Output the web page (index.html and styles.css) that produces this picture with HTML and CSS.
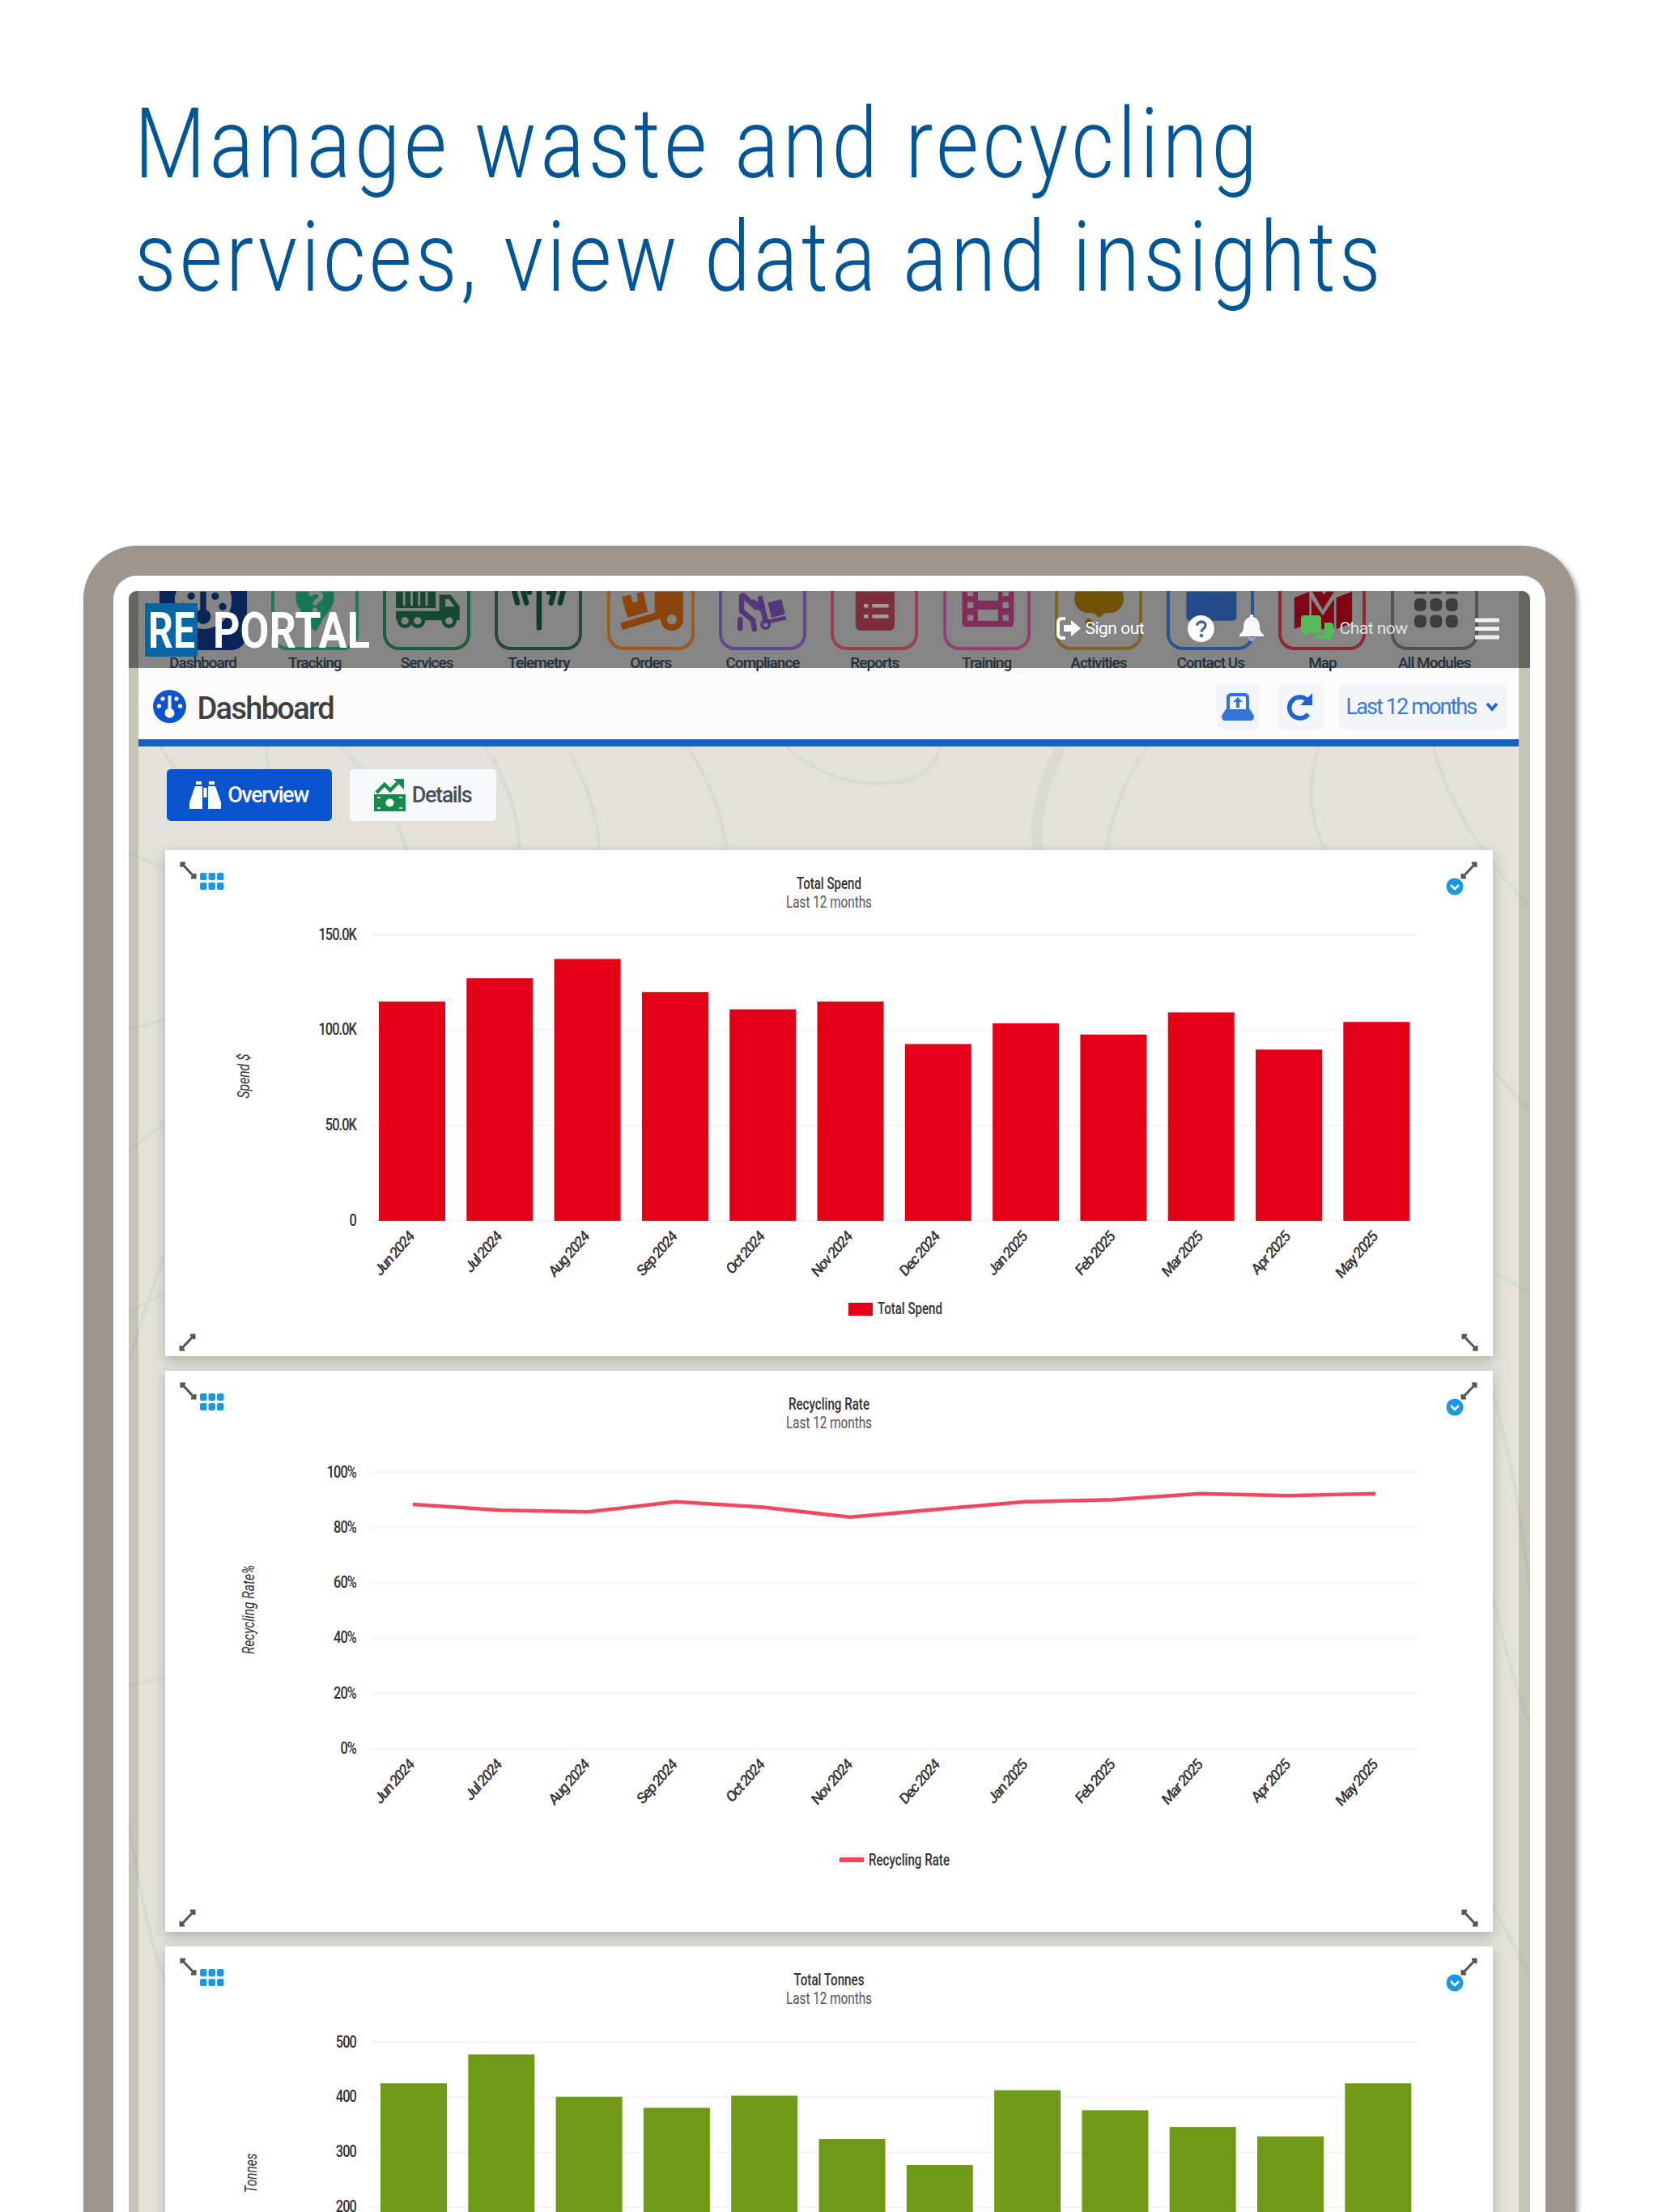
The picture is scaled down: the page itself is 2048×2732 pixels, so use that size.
FILE: index.html
```html
<!DOCTYPE html>
<html lang="en">
<head>
    <meta charset="UTF-8">
    <meta name="viewport" content="width=device-width, initial-scale=1.0">
    <title>RE PORTAL - Dashboard</title>
    <link rel="stylesheet" href="styles.css">
</head>
<body>
    <h1 class="headline">
        <span class="line line-one">Manage waste and recycling</span>
        <span class="line line-two">services, view data and insights</span>
    </h1>

    <div class="tablet">
        <div class="screen">
            <header class="header">
                <div class="modules">
                    <div class="module dashboard">
                        <svg viewBox="0 0 108 73"><circle cx="54" cy="12" r="38" fill="#858585"/><path d="M50 0h8v24a10 10 0 1 1-8 0z"/><circle cx="38" cy="6" r="5"/><circle cx="70" cy="6" r="5"/><circle cx="80" cy="20" r="5"/><circle cx="28" cy="20" r="5"/></svg>
                        <span>Dashboard</span>
                    </div>
                    <div class="module tracking">
                        <svg viewBox="0 0 108 73"><path d="M29 0h50c3 18-7 27-14 36l-9 16h-4l-9-16C36 27 26 18 29 0z"/><path d="M47 5c3-6 15-6 15 1 0 6-8 5-8 12" fill="none" stroke="#858585" stroke-width="6"/><circle cx="54" cy="25" r="3.5" fill="#858585"/></svg>
                        <span>Tracking</span>
                    </div>
                    <div class="module services">
                        <svg viewBox="0 0 108 73"><path d="M13 0h53v22H13zM71 4h15l12 16v18H13V26h58z"/><path d="M24 0v19M34 0v19M44 0v19M54 0v19" stroke="#858585" stroke-width="3"/><path d="M79 10h5l7 10H79z" fill="#858585"/><g fill="#858585" stroke="#154a30" stroke-width="5"><circle cx="25" cy="39" r="7.5"/><circle cx="42" cy="39" r="7.5"/><circle cx="84" cy="39" r="7.5"/></g></svg>
                        <span>Services</span>
                    </div>
                    <div class="module telemetry">
                        <svg viewBox="0 0 108 73"><path d="M55 0v48M42 0v1M68 0v1M34 0l4 15M22 0l4 15M75 0l-4 15M87 0l-4 15" fill="none" stroke="#103a2a" stroke-width="7" stroke-linecap="round"/></svg>
                        <span>Telemetry</span>
                    </div>
                    <div class="module orders">
                        <svg viewBox="0 0 108 73"><path d="M15 7l12-3 3 11 7-2-2-11 9-2 6 27-27 8zM59 0h38v38a15 15 0 1 1-30-2l-51 15-3-9 46-14z"/><circle cx="82" cy="37" r="6.5" fill="#858585"/></svg>
                        <span>Orders</span>
                    </div>
                    <div class="module compliance">
                        <svg viewBox="0 0 108 73"><path d="M24 37v12M26 26l15 12 2 12M26 6l0 20M28 5l17 16M51 9l0 13-9-8M51 9l7 30" fill="none" stroke="#54367a" stroke-width="7" stroke-linecap="round"/><circle cx="58" cy="44" r="5" fill="none" stroke="#54367a" stroke-width="4"/><path d="M61 40l24-5" stroke="#54367a" stroke-width="5"/><path d="M61 15l18-5 5 20-18 5z"/></svg>
                        <span>Compliance</span>
                    </div>
                    <div class="module reports">
                        <svg viewBox="0 0 108 73"><path d="M29 0h52v45q0 7-7 7H36q-7 0-7-7z"/><path d="M51 19h22M51 33h22M40 19h6M40 33h6" stroke="#a09a9a" stroke-width="5"/></svg>
                        <span>Reports</span>
                    </div>
                    <div class="module training">
                        <svg viewBox="0 0 108 73"><path d="M21 0h69v41q0 6-6 6H27q-6 0-6-6z"/><path d="M42 0h27v12H42zM42 24h27v15H42zM28 0h8v6h-8zM75 0h8v6h-8zM28 14h8v8h-8zM75 14h8v8h-8zM28 31h8v8h-8zM75 31h8v8h-8z" fill="#858585"/></svg>
                        <span>Training</span>
                    </div>
                    <div class="module activities">
                        <svg viewBox="0 0 108 73"><path d="M24 0h62c4 12 0 24-12 28l-12 1-7 6-7-6-12-1C24 24 18 12 24 0z"/><circle cx="41" cy="41" r="5"/></svg>
                        <span>Activities</span>
                    </div>
                    <div class="module contact">
                        <svg viewBox="0 0 108 73"><path d="M22 0h67v33q0 6-6 6H28q-6 0-6-6z"/></svg>
                        <span>Contact Us</span>
                    </div>
                    <div class="module map">
                        <svg viewBox="0 0 108 73"><path d="M17 8l20-8v42l-20 8zM73 8l21-8v42l-21 8zM40 10l15 22 15-22v38l-15 2-15-6zM41 0h12l4 4 3-4h10L55 24z"/></svg>
                        <span>Map</span>
                    </div>
                    <div class="module all">
                        <svg viewBox="0 0 108 73"><path d="M27 0h16v3H27zM47 0h16v3H47zM69 0h16v3H69z"/><g><rect x="27" y="9" width="16" height="17" rx="6"/><rect x="48" y="9" width="16" height="17" rx="6"/><rect x="69" y="9" width="16" height="17" rx="6"/><rect x="27" y="31" width="16" height="17" rx="6"/><rect x="48" y="31" width="16" height="17" rx="6"/><rect x="69" y="31" width="16" height="17" rx="6"/></g></svg>
                        <span>All Modules</span>
                    </div>
                </div>
                <div class="topbar">
                    <svg class="logo" viewBox="0 0 280 66">
                        <rect width="65" height="66" fill="#0666a4"/>
                        <text x="4" y="55" textLength="58" lengthAdjust="spacingAndGlyphs">RE</text>
                        <text x="84" y="55" textLength="194" lengthAdjust="spacingAndGlyphs">PORTAL</text>
                    </svg>
                    <div class="topbar-links">
                        <a class="sign-out">
                            <svg width="31" height="28" viewBox="0 0 31 28"><path d="M11 2H7Q2 2 2 7v14q0 5 5 5h4" fill="none" stroke="#fff" stroke-width="4"/><path d="M9 10h9V4l12 10-12 10v-6H9z" fill="#fff"/></svg>
                            Sign out
                        </a>
                        <svg class="help" width="33" height="33" viewBox="0 0 33 33"><circle cx="16.500" cy="16.500" r="16.500" fill="#fff"/><path d="M11.500 12.500c1-6 10.500-6 10.500 0 0 4-5 4-5 8" fill="none" stroke="#4a6790" stroke-width="3.500"/><circle cx="17" cy="25" r="2.300" fill="#4a6790"/></svg>
                        <svg class="bell" width="30" height="36" viewBox="0 0 30 36"><path d="M13 1h4v3c7 2 8 8 8 13 0 4 2 6 5 9v2H0v-2c3-3 5-5 5-9C5 12 6 6 13 4z" fill="#f8f8f8"/><path d="M11 29h8q0 5-4 5t-4-5z" fill="#8aa6cc"/></svg>
                        <a class="chat">
                            <svg width="40" height="33" viewBox="0 0 40 33"><path d="M4 0h17q4 0 4 4v14q0 4-4 4H10l-6 5v-5q-4 0-4-4V4q0-4 4-4z"/><path d="M29 9h7q4 0 4 4v12q0 3-3 3v5l-6-4H20q-4 0-4-4h7q6 0 6-6z"/></svg>
                            Chat now
                        </a>
                        <svg class="menu" width="30" height="27" viewBox="0 0 30 27"><path d="M0 3h30M0 13.500h30M0 24h30" stroke="#eee" stroke-width="5"/></svg>
                    </div>
                </div>
            </header>

            <div class="titlebar">
                <svg width="41" height="41" viewBox="0 0 41 41"><circle cx="20.500" cy="20.500" r="20.500" fill="#0b53cf"/><path d="M18.500 7h4v16a6 6 0 1 1-4 0z" fill="#fff"/><g fill="#fff"><circle cx="12" cy="11" r="2.600"/><circle cx="29" cy="11" r="2.600"/><circle cx="7.500" cy="20" r="2.600"/><circle cx="33.500" cy="20" r="2.600"/></g></svg>
                <h2>Dashboard</h2>
                <div class="tools">
                    <button class="tool save"><svg width="40" height="34" viewBox="0 0 40 34"><path d="M8 22V6q0-4 4-4h16q4 0 4 4v16" fill="none" stroke="#3473d8" stroke-width="4"/><path d="M5 20h30l5 8q0 6-4 6H4q-4 0-4-6z" fill="#3473d8"/><path d="M20 5l6 6h-4v7h-4v-7h-4z" fill="#3473d8"/></svg></button>
                    <button class="tool refresh"><svg width="33" height="34" viewBox="0 0 33 34"><path d="M26 9A13 13 0 1 0 27 26" fill="none" stroke="#1f64d6" stroke-width="5.500"/><path d="M32 0v15H17z" fill="#1f64d6"/></svg></button>
                    <button class="period">Last 12 months <svg width="16" height="12" viewBox="0 0 16 12"><path d="M2 2l6 7 6-7" fill="none" stroke="#1f64d6" stroke-width="3.600"/></svg></button>
                </div>
            </div>

            <main class="content">
                <svg class="contours" viewBox="0 0 1731 1810" fill="none" stroke="#000" stroke-opacity=".03" stroke-width="4">
                    <path d="M38 0q40 60 110 90M170 0q0 20 5 30M262 0q80 80 90 170M440 0q60 90 35 190M540 0q60 100 35 210M690 0q60 90 50 200M812 0q50 46 115 46T1002 0"/>
                    <path d="M1152 0q-50 90-18 200" stroke-width="14"/>
                    <path d="M1258 0q-60 90-55 200M1470 0q-30 100 40 170M1612 0q20 90 119 200M0 130q60 30 100 40M0 350l50-14M0 500q40-30 60-50M0 700q30-20 60-30M0 760q60-200 60-130M0 1160l50-12M1685 400l46 50M1685 650l46 24M1685 800q30 100 46 250M1685 1050q20 90 46 160M0 1330q30 180 50 200M1685 1430q30 60 46 90"/>
                </svg>
                <nav class="tabs">
                    <button class="tab active">
                        <svg width="39" height="34" viewBox="0 0 39 34" fill="#fff"><path d="M8 0h7v4H8zM24 0h7v4h-7zM7 6h9v28H0v-8zM23 6h9l7 20v8H23zM17.500 8h4v12h-4z"/></svg>
                        Overview
                    </button>
                    <button class="tab details">
                        <svg width="39" height="40" viewBox="0 0 39 40"><path d="M3 17l10-10 7 7 9-9" fill="none" stroke="#168a4c" stroke-width="4.500"/><path d="M24 0h13v13z" fill="#168a4c"/><path d="M0 19h39v21H0z" fill="#168a4c"/><circle cx="19.500" cy="29.500" r="5" fill="#fff"/><path d="M4 23h4M4 36h4M31 23h4M31 36h4" stroke="#bfe2cd" stroke-width="2"/></svg>
                        Details
                    </button>
                </nav>
                <section class="card"><svg class="chart" id="spend" width="1640" height="625"></svg></section>
                <section class="card"><svg class="chart" id="recycling" width="1640" height="693"></svg></section>
                <section class="card"><svg class="chart" id="tonnes" width="1640" height="693"></svg></section>
            </main>
        </div>
    </div>

    <script src="script.js"></script>
</body>
</html>
```
FILE: styles.css
```css
* {
    box-sizing: border-box;
}
html {
    overflow: hidden;
}
body {
    margin: 0;
    height: 2732px;
    overflow: hidden;
    background: #ffffff;
    font-family: Roboto, "Liberation Sans", sans-serif;
}
button {
    border: none;
    font-family: inherit;
    padding: 0;
}
.headline {
    margin: 0;
    padding: 108px 0 0 166px;
    height: 674px;
    font-size: 121px;
    line-height: 140px;
    font-weight: 300;
    color: #005596;
}
.line {
    display: block;
    width: max-content;
    white-space: nowrap;
    transform-origin: left;
    transform: scaleX(0.84);
}
.line-one {
    letter-spacing: 5.700px;
}
.line-two {
    letter-spacing: 5.300px;
}

/* device frame */
.tablet {
    width: 1843px;
    height: 2058px;
    margin: 0 auto;
    padding: 19px 19px 0;
    border: 37px solid #9e958e;
    border-bottom: none;
    border-radius: 66px 66px 0 0;
    background: #ffffff;
    box-shadow: 4px 3px 5px rgba(0, 0, 0, 0.3);
}
.screen {
    height: 100%;
    border-radius: 10px 10px 0 0;
    overflow: hidden;
    background: #e2e2db;
}

/* header */
.header {
    position: relative;
    z-index: 2;
    height: 95px;
    background: #858585;
    border-left: 12px solid #66665c;
    border-right: 14px solid #66665c;
}
.modules {
    display: flex;
    gap: 30.300px;
    padding-left: 26px;
}
.module {
    flex: none;
    width: 108px;
    display: flex;
    flex-direction: column;
    align-items: center;
    font-size: 19px;
    line-height: 24px;
    font-weight: 500;
    letter-spacing: -1px;
    color: #22303a;
}
.module svg {
    width: 108px;
    height: 73px;
    margin-bottom: 4px;
    border: 4px solid;
    border-top: none;
    border-radius: 0 0 20px 20px;
}
.module span {
    white-space: nowrap;
}
.dashboard svg { border-color: #0a2458; background: #0a2458; fill: #0a2458; }
.tracking svg { border-color: #24755a; fill: #167655; }
.services svg { border-color: #1f5c3d; fill: #154a30; }
.telemetry svg { border-color: #26473a; }
.orders svg { border-color: #a05a20; fill: #8c440c; }
.compliance svg { border-color: #634a8a; fill: #54367a; }
.reports svg { border-color: #96414b; fill: #7c2f38; }
.training svg { border-color: #93406f; fill: #802d59; }
.activities svg { border-color: #7c6427; fill: #705206; }
.contact svg { border-color: #2b5590; fill: #224b88; }
.map svg { border-color: #8f2832; fill: #7f0615; }
.all svg { border-color: #4f5357; fill: #3c3c3c; }

.topbar {
    position: absolute;
    inset: 0;
    display: flex;
    justify-content: space-between;
    padding: 15px 24px 0 8px;
    color: #ffffff;
}
.logo {
    width: 280px;
    height: 66px;
}
.logo text {
    font-size: 61px;
    font-weight: 700;
    fill: #ffffff;
}
.topbar-links {
    display: flex;
    align-items: center;
    height: 62px;
    font-size: 21px;
    letter-spacing: -0.5px;
}
.topbar-links a {
    display: flex;
    align-items: center;
    gap: 5px;
    white-space: nowrap;
}
.sign-out {
    width: 162px;
}
.bell {
    margin: 0 46px 0 31px;
}
.chat {
    width: 215px;
    color: #e0e0e0;
    fill: #58b957;
}
.topbar-links .chat {
    gap: 8px;
}

/* page title */
.titlebar {
    position: relative;
    display: flex;
    align-items: center;
    height: 97px;
    margin: 0 14px 0 12px;
    padding: 7px 15px 0 18px;
    background: #fcfcfc;
    border-bottom: 9px solid #1960cf;
    box-shadow: -12px 0 0 #c5c5b7, 14px 0 0 #c5c5b7;
}
.titlebar h2 {
    margin: 5px 0 0 14px;
    font-size: 38px;
    font-weight: 500;
    letter-spacing: -1.700px;
    color: #404040;
}
.tools {
    display: flex;
    margin-left: auto;
}
.tool, .period {
    display: flex;
    align-items: center;
    justify-content: center;
    height: 57px;
    border-radius: 5px;
    background: #f3f5f9;
}
.tool {
    width: 52px;
    margin-right: 23px;
}
.refresh {
    width: 56px;
    margin-right: 20px;
}
.period {
    width: 207px;
    gap: 12px;
    font-size: 27px;
    letter-spacing: -1.900px;
    white-space: nowrap;
    color: #3a78d8;
}

/* dashboard body */
.content {
    position: relative;
    height: 1900px;
    padding: 28px 34px 0 33px;
    border-left: 12px solid #c5c5b7;
    border-right: 14px solid #c5c5b7;
    background: linear-gradient(#e8e2d9, #e2e2db 14px);
}
.contours {
    position: absolute;
    left: -12px;
    top: 0;
    width: 1731px;
    height: 1810px;
}
.tabs {
    position: relative;
    display: flex;
    gap: 22px;
    height: 100px;
    padding-left: 2px;
}
.tab {
    display: flex;
    align-items: center;
    justify-content: center;
    gap: 8px;
    width: 204px;
    height: 64px;
    border-radius: 5px;
    font-size: 27px;
    font-weight: 500;
    letter-spacing: -1.400px;
    background: #f8f9fb;
    color: #45515c;
}
.tab.active {
    background: #0b53cc;
    color: #ffffff;
}
.details {
    width: 181px;
}
.card {
    position: relative;
    width: 1640px;
    margin-bottom: 18px;
    background: #ffffff;
    box-shadow: 0 5px 14px rgba(60, 60, 50, 0.3);
}
.chart {
    display: block;
    font-size: 19.500px;
    fill: #333333;
}
.chart .title {
    font-weight: 500;
}
.chart .subtitle {
    fill: #555555;
}
.chart .axis-title {
    font-style: italic;
}
.chart .tick {
    font-weight: 500;
    letter-spacing: -1.100px;
    text-anchor: end;
}
.chart .month {
    letter-spacing: -1.700px;
}
.chart .grid-line {
    stroke: #f6f6f6;
    stroke-width: 3;
}
.chart .handle {
    fill: none;
    stroke: #555555;
    stroke-width: 3;
}
.chart .blue {
    fill: #1c97e3;
}
```
FILE: script.js
```js
const months = ['Jun 2024', 'Jul 2024', 'Aug 2024', 'Sep 2024', 'Oct 2024', 'Nov 2024',
    'Dec 2024', 'Jan 2025', 'Feb 2025', 'Mar 2025', 'Apr 2025', 'May 2025'];
const STEP = 108.3;

function label(x, y, text, width, cls) {
    return `<text class="${cls}" x="${x}" y="${y}" textLength="${width}" lengthAdjust="spacingAndGlyphs">${text}</text>`;
}

// double headed arrow in each corner
function handle(x, y, flip) {
    const t = flip ? `translate(${x + 20} ${y}) scale(-1 1)` : `translate(${x} ${y})`;
    return `<path class="handle" transform="${t}" d="M3 3L18 19M2 7V2h5M14 20h5v-5"/>`;
}

function drawChart(id, c) {
    const svg = document.getElementById(id);
    const h = c.height;
    let out = handle(18, 14) + handle(1601, 14, true) + handle(18, h - 28, true) + handle(1601, h - 28);

    for (let i = 0; i < 6; i++) {
        out += `<rect class="blue" x="${43 + (i % 3) * 10.5}" y="${28 + Math.floor(i / 3) * 12}" width="8.500" height="9" rx="2"/>`;
    }
    out += `<circle class="blue" cx="1593" cy="45" r="10.500"/><path d="M1588 43l5 5 5-5" fill="none" stroke="#fff" stroke-width="2.500"/>`;

    out += label(820 - c.titleWidth / 2, 48, c.title, c.titleWidth, 'title');
    out += label(767, 71, 'Last 12 months', 106, 'subtitle');

    c.ticks.forEach((tick, i) => {
        const y = c.top + i * c.gap;
        out += `<line class="grid-line" x1="254" x2="1549" y1="${y}" y2="${y}"/>`;
        out += `<text class="tick" transform="translate(236 ${y + 6}) scale(.84 1)">${tick}</text>`;
    });
    const base = c.top + (c.ticks.length - 1) * c.gap;
    const toY = v => base - v / c.max * (base - c.top);

    if (c.type === 'bar') {
        c.data.forEach((v, i) => {
            out += `<rect x="${c.left + i * STEP}" y="${toY(v)}" width="82" height="${base - toY(v)}" fill="${c.color}"/>`;
        });
    } else {
        const points = c.data.map((v, i) => `${306 + i * 108.1},${toY(v)}`).join(' ');
        out += `<polyline points="${points}" fill="none" stroke="${c.color}" stroke-width="4.500"/>`;
    }

    months.forEach((m, i) => {
        out += `<text class="tick month" transform="translate(${308 + i * 108.2} ${base + 21}) scale(.88 1) rotate(-45)">${m}</text>`;
    });

    out += `<g transform="translate(${c.axisX} ${c.axisY}) rotate(-90)">${label(-c.axisWidth / 2, 7, c.axis, c.axisWidth, 'axis-title')}</g>`;

    if (c.type === 'bar') {
        out += `<rect x="844" y="${c.legendY - 14}" width="30" height="16" fill="${c.color}"/>`;
        out += label(880, c.legendY, c.title, c.titleWidth, 'title');
    } else {
        out += `<rect x="833" y="${c.legendY - 10}" width="30" height="6" fill="${c.color}"/>`;
        out += label(869, c.legendY, c.title, c.titleWidth, 'title');
    }
    svg.innerHTML = out;
}

drawChart('spend', {
    type: 'bar', height: 625, title: 'Total Spend', titleWidth: 80, color: '#e30017',
    ticks: ['150.0K', '100.0K', '50.0K', '0'], top: 104.5, gap: 117.8, max: 150, left: 264,
    data: [115, 127.2, 137.3, 120, 110.9, 115, 92.7, 103.6, 97.7, 109.3, 89.8, 104.3],
    axis: 'Spend $', axisX: 97, axisY: 279, axisWidth: 55, legendY: 573
});

drawChart('recycling', {
    type: 'line', height: 693, title: 'Recycling Rate', titleWidth: 100, color: '#f0485c',
    ticks: ['100%', '80%', '60%', '40%', '20%', '0%'], top: 125.5, gap: 68.3, max: 100,
    data: [88.4, 86.3, 85.7, 89.4, 87.4, 83.8, 86.7, 89.4, 90.1, 92.3, 91.6, 92.3],
    axis: 'Recycling Rate%', axisX: 103, axisY: 295, axisWidth: 110, legendY: 611
});

drawChart('tonnes', {
    type: 'bar', height: 693, title: 'Total Tonnes', titleWidth: 87, color: '#6e9a18',
    ticks: ['500', '400', '300', '200', '100', '0'], top: 118.5, gap: 67.9, max: 500, left: 266,
    data: [425.5, 478, 401, 381, 403, 324, 277, 413, 376.5, 346, 329, 425.5],
    axis: 'Tonnes', axisX: 106, axisY: 280, axisWidth: 49, legendY: 620
});
```
